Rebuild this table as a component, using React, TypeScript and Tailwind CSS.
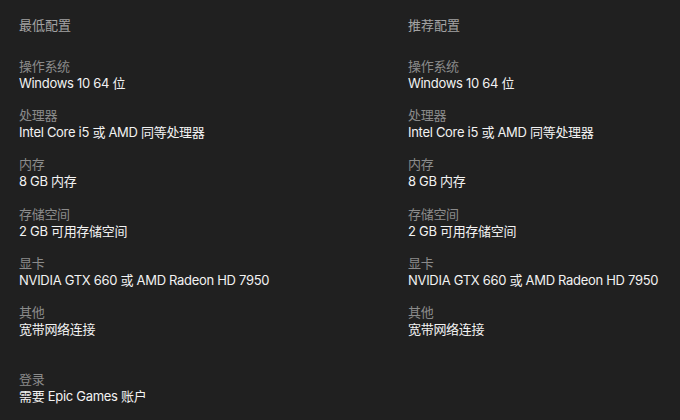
const minimum = [
  { label: "操作系统", value: "Windows 10 64 位" },
  { label: "处理器", value: "Intel Core i5 或 AMD 同等处理器" },
  { label: "内存", value: "8 GB 内存" },
  { label: "存储空间", value: "2 GB 可用存储空间" },
  { label: "显卡", value: "NVIDIA GTX 660 或 AMD Radeon HD 7950" },
  { label: "其他", value: "宽带网络连接" },
];

const recommended = minimum;

function SpecColumn({ title, specs }: { title: string; specs: { label: string; value: string }[] }) {
  return (
    <div>
      <h3 className="text-[13px] leading-[17px] tracking-normal text-[#a3a3a3] mb-[24px]">{title}</h3>
      <ul className="flex flex-col gap-[15.4px]">
        {specs.map((s) => (
          <li key={s.label} className="leading-[17px]">
            <div className="text-[#8b8b8b]">{s.label}</div>
            <div className="text-[#f2f2f2]">{s.value}</div>
          </li>
        ))}
      </ul>
    </div>
  );
}

export default function App() {
  return (
    <div
      className="w-[680px] h-[420px] bg-[#202020] pl-[19px] pt-[16.5px] text-[13px] tracking-[-0.3px] overflow-hidden"
      style={{ fontFamily: 'Inter, "Noto Sans CJK SC", sans-serif' }}
    >
      <div className="grid grid-cols-[389px_1fr]">
        <SpecColumn title="最低配置" specs={minimum} />
        <SpecColumn title="推荐配置" specs={recommended} />
      </div>
      <div className="mt-[33px] leading-[17px]">
        <div className="text-[#8b8b8b]">登录</div>
        <div className="text-[#f2f2f2]">需要 Epic Games 账户</div>
      </div>
    </div>
  );
}
